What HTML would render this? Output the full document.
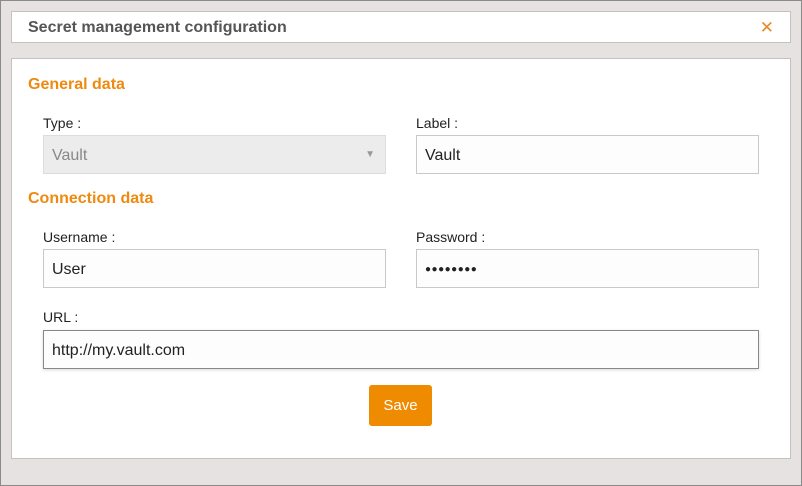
<!DOCTYPE html>
<html><head><style>
*{box-sizing:border-box;margin:0;padding:0}
body{width:802px;height:486px;background:#e6e2e1;font-family:"Liberation Sans",sans-serif;position:relative;overflow:hidden}
.frame{position:absolute;left:0;top:0;width:802px;height:486px;border:1px solid #8a8a8a}
.box{position:absolute;background:#fff;border:1px solid #c4c2c1}
.h{left:11px;top:11px;width:780px;height:32px}
.h .t{position:absolute;left:16px;top:7px;font-size:16px;font-weight:bold;color:#555}
.h .x{position:absolute;right:16px;top:6px;font-size:17px;color:#e8892a}
.b{left:11px;top:58px;width:780px;height:401px}
.sec{position:absolute;font-size:16px;font-weight:bold;color:#ee8a0f}
.lbl{position:absolute;font-size:14px;color:#222}
.in{position:absolute;height:39px;border:1px solid #c9c9c9;background:#fdfdfd;font-size:16px;color:#222;padding:11px 8px 0}
.save{position:absolute;left:369px;top:385px;width:63px;height:41px;background:#ee8b00;border-radius:3px;color:#fff;font-size:15px;text-align:center;line-height:42px}
</style></head><body>
<div class="frame"></div>
<div class="box h"><div class="t">Secret management configuration</div><div class="x">✕</div></div>
<div class="box b"></div>
<div class="sec" style="left:28px;top:76px">General data</div>
<div class="lbl" style="left:43px;top:115px">Type :</div>
<div class="in" style="left:43px;top:135px;width:343px;background:#ececec;color:#888;border-color:#ddd">Vault<span style="position:absolute;right:10px;top:13px;font-size:10px;color:#999">▼</span></div>
<div class="lbl" style="left:416px;top:115px">Label :</div>
<div class="in" style="left:416px;top:135px;width:343px">Vault</div>
<div class="sec" style="left:28px;top:190px">Connection data</div>
<div class="lbl" style="left:43px;top:229px">Username :</div>
<div class="in" style="left:43px;top:249px;width:343px">User</div>
<div class="lbl" style="left:416px;top:229px">Password :</div>
<div class="in" style="left:416px;top:249px;width:343px;font-size:10px;padding-top:14px;letter-spacing:0.5px">●●●●●●●●</div>
<div class="lbl" style="left:43px;top:309px">URL :</div>
<div class="in" style="left:43px;top:330px;width:716px;border-color:#888;box-shadow:0 1px 3px rgba(0,0,0,.15)">http://my.vault.com</div>
<div class="save">Save</div>
</body></html>
